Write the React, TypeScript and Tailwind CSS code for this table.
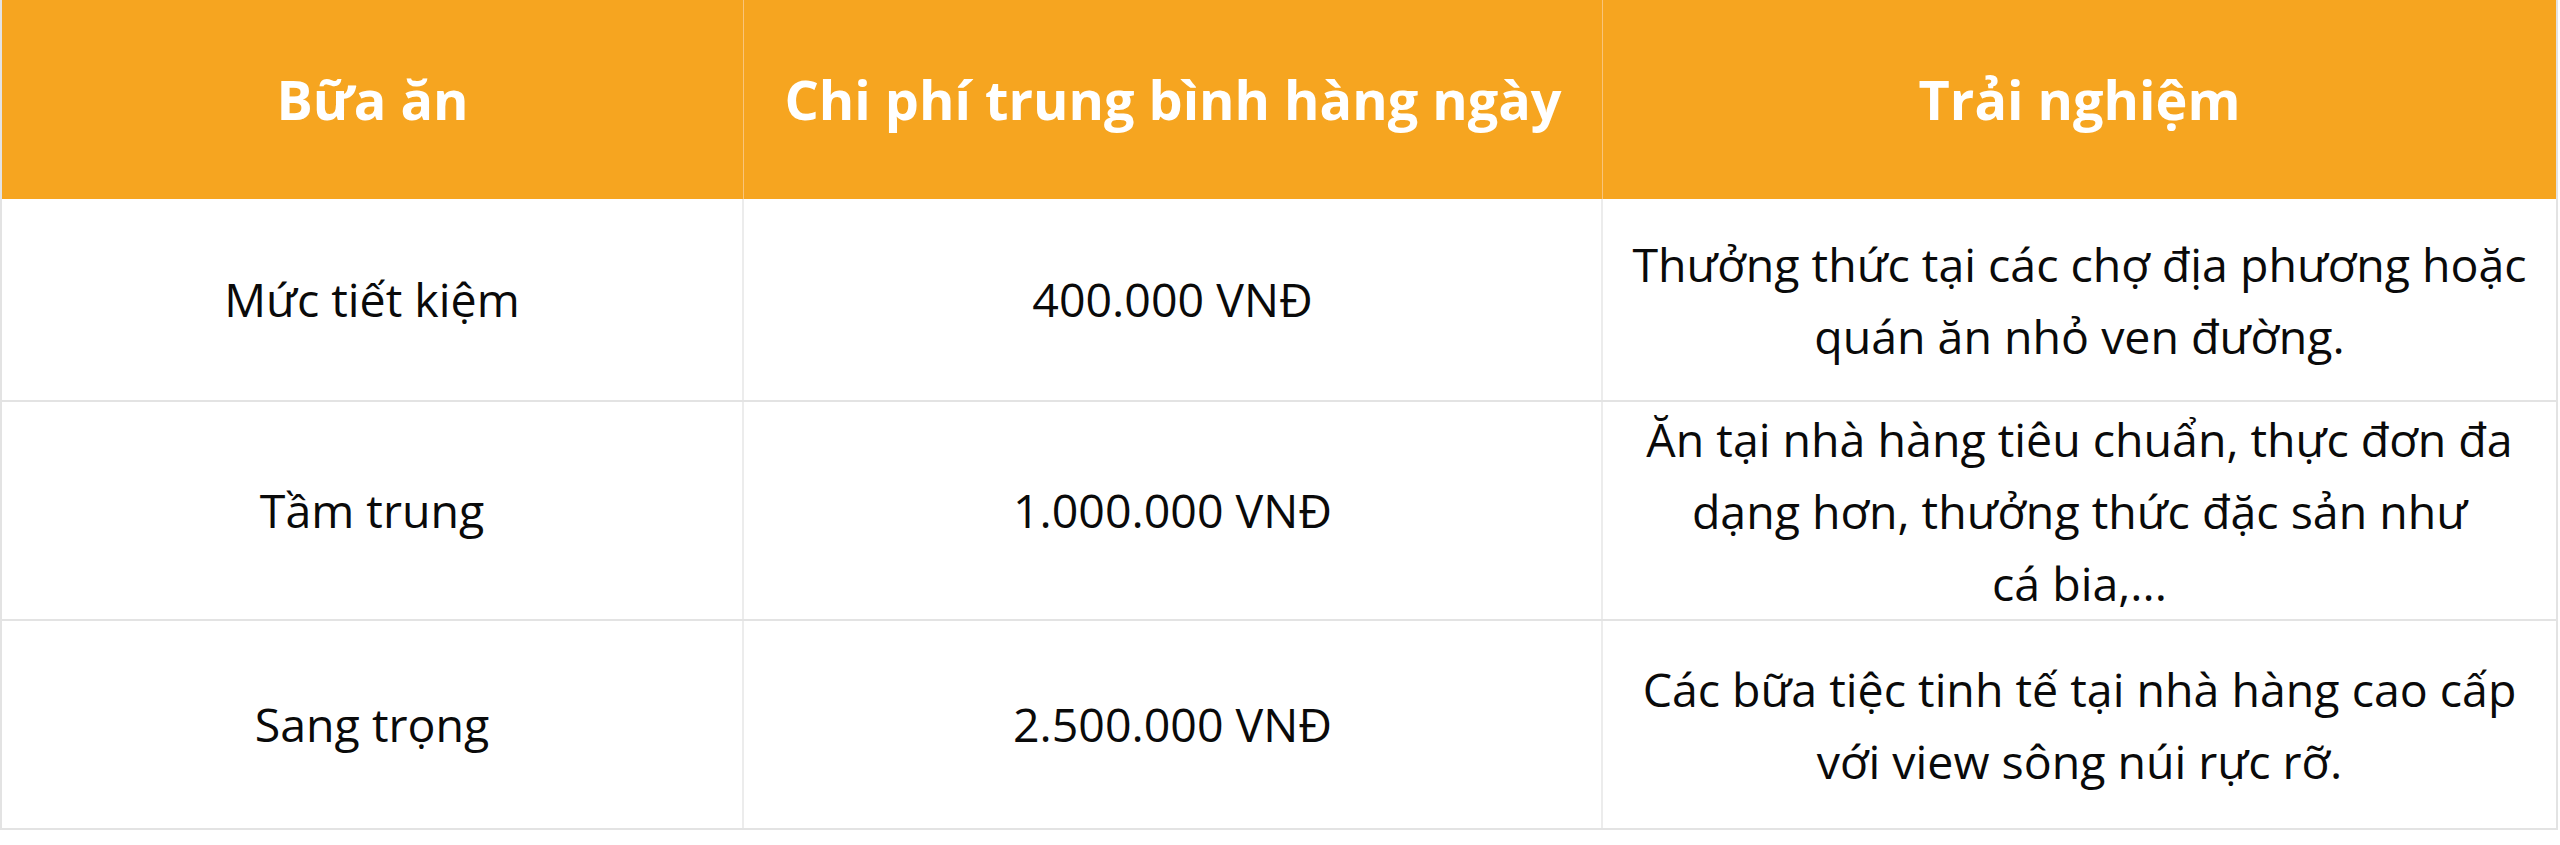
const rows = [
  {
    meal: 'Mức tiết kiệm',
    cost: '400.000 VNĐ',
    note: ['Thưởng thức tại các chợ địa phương hoặc quán ăn nhỏ ven đường.'],
    h: 'h-[203px]',
  },
  {
    meal: 'Tầm trung',
    cost: '1.000.000 VNĐ',
    note: ['Ăn tại nhà hàng tiêu chuẩn, thực đơn đa dạng hơn, thưởng thức đặc sản như ', 'cá bia,...'],
    h: 'h-[219px]',
  },
  {
    meal: 'Sang trọng',
    cost: '2.500.000 VNĐ',
    note: ['Các bữa tiệc tinh tế tại nhà hàng cao cấp với view sông núi rực rỡ.'],
    h: 'h-[207px]',
  },
];

export default function App() {
  return (
    <div className="w-[2560px] h-[845px] bg-white font-['Open_Sans',sans-serif]">
      <div className="w-[2558px] border-l-2 border-r-2 border-b-2 border-[#e3e3e3]">
        {/* header */}
        <div className="grid grid-cols-[742px_859px_1fr] h-[199px] bg-[#f6a520] text-white font-bold text-[54px]">
          <div className="flex items-center justify-center border-r border-[#f9c47a]">Bữa ăn</div>
          <div className="flex items-center justify-center border-r border-[#f9c47a]">Chi phí trung bình hàng ngày</div>
          <div className="flex items-center justify-center">Trải nghiệm</div>
        </div>

        {rows.map((r, i) => (
          <div
            key={r.meal}
            className={`grid grid-cols-[742px_859px_1fr] ${r.h} text-[46.5px] text-[#0a0a0a] ${i < rows.length - 1 ? 'border-b-2 border-[#e3e3e3]' : ''}`}
          >
            <div className="flex items-center justify-center border-r-2 border-[#ececec]">{r.meal}</div>
            <div className="flex items-center justify-center border-r-2 border-[#ececec]">{r.cost}</div>
            <div className="flex items-center justify-center px-5 text-center leading-[72px]">
              <p>
                {r.note[0]}
                {r.note[1] && (
                  <>
                    <br />
                    {r.note[1]}
                  </>
                )}
              </p>
            </div>
          </div>
        ))}
      </div>
    </div>
  );
}
